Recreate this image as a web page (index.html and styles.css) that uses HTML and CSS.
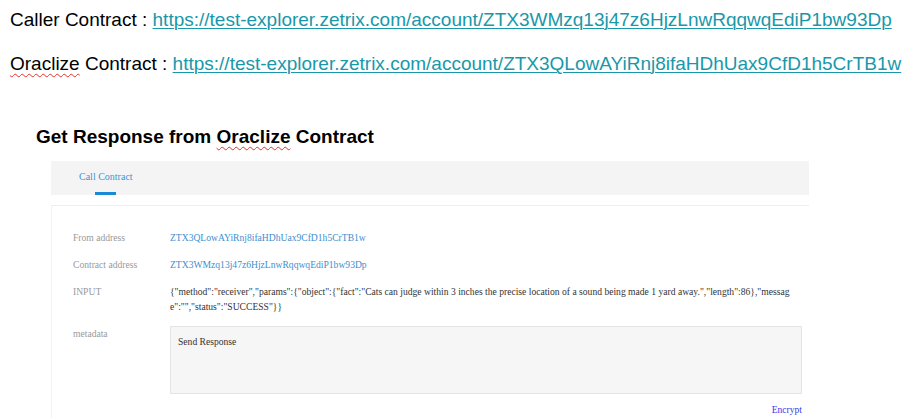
FILE: index.html
```html
<!DOCTYPE html>
<html>
<head>
<meta charset="utf-8">
<link rel="stylesheet" href="styles.css">
</head>
<body>
<div class="links">
  <p class="line">Caller Contract : <a class="url" href="#">https://test-explorer.zetrix.com/account/ZTX3WMzq13j47z6HjzLnwRqqwqEdiP1bw93Dp</a></p>
  <p class="line line2"><span class="spell">Oraclize</span> Contract : <a class="url" href="#">https://test-explorer.zetrix.com/account/ZTX3QLowAYiRnj8ifaHDhUax9CfD1h5CrTB1w</a></p>
</div>
<h2 class="heading">Get Response from <span class="spell">Oraclize</span> Contract</h2>
<div class="panel">
  <div class="tabbar">
    <div class="tab">Call Contract</div>
  </div>
  <div class="card">
    <div class="row">
      <div class="label">From address</div>
      <div class="value addr">ZTX3QLowAYiRnj8ifaHDhUax9CfD1h5CrTB1w</div>
    </div>
    <div class="row">
      <div class="label">Contract address</div>
      <div class="value addr">ZTX3WMzq13j47z6HjzLnwRqqwqEdiP1bw93Dp</div>
    </div>
    <div class="row">
      <div class="label">INPUT</div>
      <div class="value json">{"method":"receiver","params":{"object":{"fact":"Cats can judge within 3 inches the precise location of a sound being made 1 yard away.","length":86},"message":"","status":"SUCCESS"}}</div>
    </div>
    <div class="row meta">
      <div class="label">metadata</div>
      <div class="value">
        <div class="textbox">Send Response</div>
        <div class="encrypt-wrap"><a class="encrypt" href="#">Encrypt</a></div>
      </div>
    </div>
  </div>
</div>
</body>
</html>
```
FILE: styles.css
```css
html, body {
  margin: 0;
  padding: 0;
  background: #ffffff;
}
body {
  font-family: "Liberation Sans", Arial, sans-serif;
  color: #000;
  width: 917px;
  height: 418px;
  overflow: hidden;
}
.links {
  padding: 9px 0 0 10px;
}
.line {
  margin: 0;
  font-size: 19px;
  line-height: 22px;
  white-space: nowrap;
}
.line2 {
  margin-top: 22px;
}
.url {
  color: #1898aa;
  text-decoration: underline;
  text-decoration-thickness: 1px;
  text-underline-offset: 2px;
}
.spell {
  text-decoration: underline wavy #e03030;
  text-decoration-thickness: 1px;
  text-underline-offset: 3px;
}
.heading {
  margin: 51px 0 0 36px;
  font-size: 19px;
  line-height: 22px;
  font-weight: bold;
}
.panel {
  margin: 13px 0 0 51px;
  width: 758px;
  font-family: "Liberation Serif", "Times New Roman", serif;
}
.tabbar {
  background: #f4f4f4;
  height: 34px;
  display: flex;
  padding-left: 28px;
}
.tab {
  position: relative;
  font-size: 10px;
  color: #3f94d4;
  line-height: 34px;
  height: 34px;
  margin-top: -1px;
}
.tab::after {
  content: "";
  position: absolute;
  left: 16px;
  width: 21px;
  bottom: -1px;
  height: 3px;
  background: #1a8ad6;
}
.card {
  margin-top: 10px;
  border-top: 1px solid #eeeeee;
  border-left: 1px solid #f2f2f2;
  padding: 24px 7px 10px 21px;
}
.row {
  display: flex;
  font-size: 9.6px;
  line-height: 15px;
  margin-bottom: 12px;
}
.label {
  width: 97px;
  flex: none;
  color: #9a9a9a;
}
.value {
  flex: 1;
  min-width: 0;
}
.addr {
  color: #3d8fd0;
}
.json {
  color: #333;
  word-break: break-all;
}
.meta {
  margin-top: 0;
  margin-bottom: 0;
}
.textbox {
  margin-top: 0;
  height: 53px;
  background: #f6f6f6;
  border: 1px solid #e4e4e4;
  padding: 7px 7px 6px;
  color: #333;
  font-size: 9.6px;
  line-height: 15px;
}
.encrypt-wrap {
  display: flex;
  justify-content: flex-end;
  margin-top: 8px;
}
.encrypt {
  color: #3a3af0;
  text-decoration: none;
}
```
